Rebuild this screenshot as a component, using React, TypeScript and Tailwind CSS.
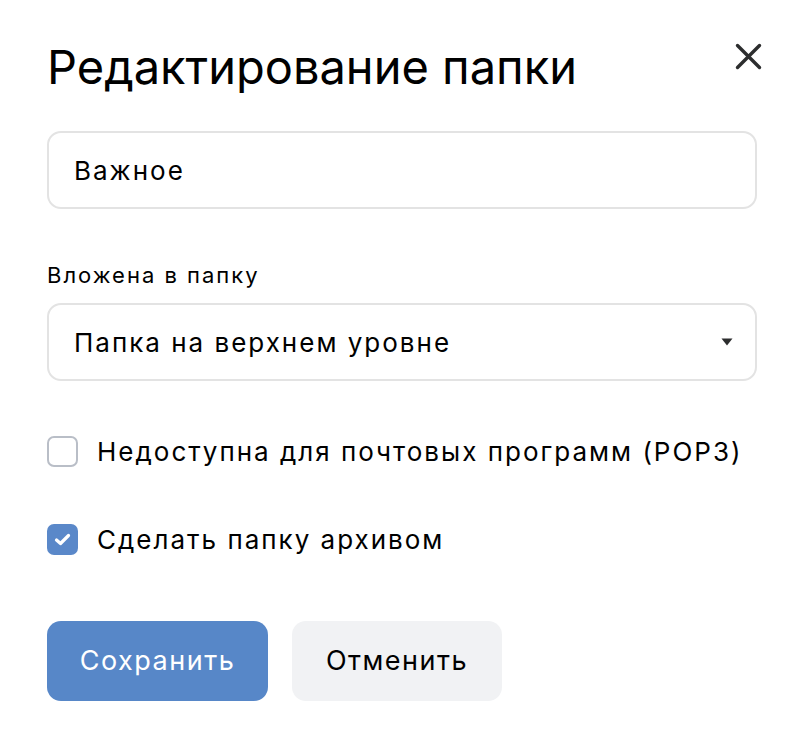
import React from "react";

function CloseIcon() {
  return (
    <svg width="27" height="27" viewBox="0 0 27 27" fill="none">
      <path d="M2.5 2.5L24.5 24.5M24.5 2.5L2.5 24.5" stroke="#2c2d2e" strokeWidth="3.4" strokeLinecap="round" />
    </svg>
  );
}

function Checkbox({ checked }: { checked: boolean }) {
  if (checked) {
    return (
      <div className="w-[31px] h-[31px] rounded-[7px] bg-[#5a88c9] flex items-center justify-center shrink-0">
        <svg width="19" height="15" viewBox="0 0 19 15" fill="none">
          <path d="M3.5 8L7.5 11.5L15.5 3.5" stroke="#fff" strokeWidth="3.2" strokeLinecap="round" strokeLinejoin="round" />
        </svg>
      </div>
    );
  }
  return <div className="w-[31px] h-[31px] rounded-[7px] border-2 border-[#b9bec7] bg-white shrink-0" />;
}

export default function App() {
  return (
    <div className="w-[804px] h-[744px] bg-white text-black px-[47px] pt-[39px]" style={{ fontFamily: "Inter, 'Noto Sans', sans-serif" }}>
      <div className="flex items-start justify-between">
        <h1 className="text-[47px] leading-[56px] font-normal">Редактирование папки</h1>
        <button className="mt-[4px] mr-[-5px]">
          <CloseIcon />
        </button>
      </div>

      <div className="mt-[36px] h-[78px] rounded-[14px] border-2 border-[#e3e3e3] flex items-center px-[25px] text-[26px] tracking-[2px]">
        Важное
      </div>

      <div className="mt-[51px] text-[22px] leading-[30px] tracking-[2px]">Вложена в папку</div>
      <div className="mt-[13px] h-[78px] rounded-[14px] border-2 border-[#e3e3e3] flex items-center justify-between pl-[25px] pr-[22px] text-[26px] tracking-[2px]">
        <span>Папка на верхнем уровне</span>
        <svg width="12" height="8" viewBox="0 0 12 8">
          <path d="M0.5 0.5H11.5L6 7.5Z" fill="#2c2d2e" />
        </svg>
      </div>

      <div className="mt-[52px] flex items-center gap-[19px] h-[36px] text-[26px] tracking-[2px]">
        <Checkbox checked={false} />
        <span>Недоступна для почтовых программ (POP3)</span>
      </div>
      <div className="mt-[52px] flex items-center gap-[19px] h-[36px] text-[26px] tracking-[2px]">
        <Checkbox checked={true} />
        <span>Сделать папку архивом</span>
      </div>

      <div className="mt-[64px] flex gap-[24px]">
        <button className="w-[221px] h-[80px] rounded-[14px] bg-[#5787c8] text-white text-[27px] tracking-[1.5px]">Сохранить</button>
        <button className="w-[210px] h-[80px] rounded-[14px] bg-[#f1f2f4] text-black text-[27px] tracking-[1.5px]">Отменить</button>
      </div>
    </div>
  );
}
